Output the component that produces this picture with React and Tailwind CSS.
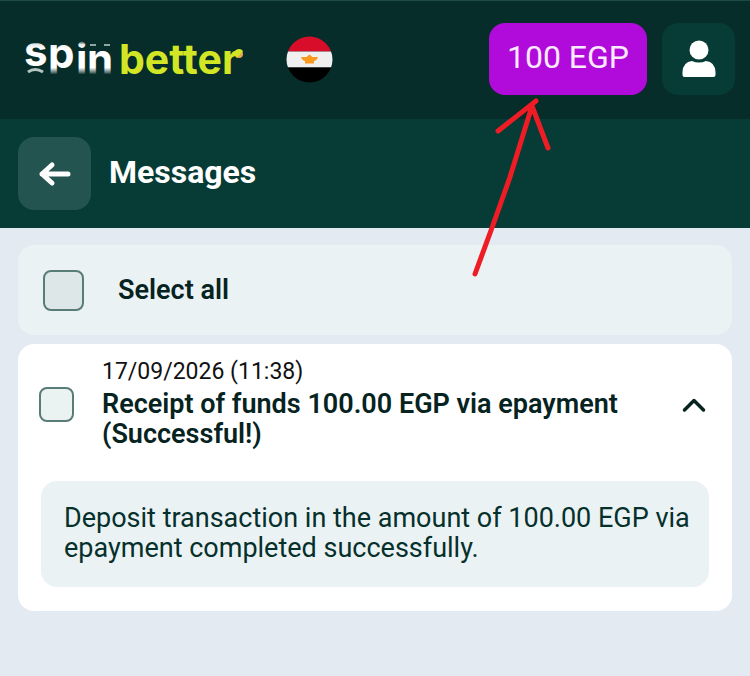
import { useState } from "react";

const messages = [
  {
    id: 1,
    date: "17/09/2026 (11:38)",
    title: "Receipt of funds 100.00 EGP via epayment (Successful!)",
    body: "Deposit transaction in the amount of 100.00 EGP via epayment completed successfully."
  }
];

// "spin" letters fade out at the edges like a slot reel
function Logo() {
  return (
    <svg width="230" height="56" viewBox="0 0 230 56" role="img" aria-label="Spin better" className="shrink-0 overflow-visible font-['Inter',sans-serif] font-bold">
      <defs>
        <linearGradient id="reel" gradientUnits="userSpaceOnUse" x1="0" y1="11" x2="0" y2="43">
          <stop offset="0" stopColor="#fff" stopOpacity="0.3" />
          <stop offset="0.08" stopColor="#fff" stopOpacity="0.9" />
          <stop offset="0.2" stopColor="#fff" />
          <stop offset="0.8" stopColor="#fff" />
          <stop offset="0.98" stopColor="#fff" stopOpacity="0.2" />
          <stop offset="1" stopColor="#fff" stopOpacity="0" />
        </linearGradient>
      </defs>
      <g fill="url(#reel)" fontSize="42">
        <text x="-1" y="35">s</text>
        <text x="23" y="37">p</text>
        <text x="51" y="43">i</text>
        <text x="62" y="43">n</text>
      </g>
      <path d="M3 41q7-5 15 0" fill="none" stroke="#b4c6c4" strokeWidth="3" />
      <path d="M65 14h6M79 14h6" stroke="#8fa5a2" strokeWidth="2" />
      <text x="94" y="43" fontSize="41" fill="#d3e625">better</text>
      <circle cx="214" cy="23" r="4" fill="#e8a555" />
      <path d="M209 23a5 5 0 0 1 9-3l-6 7z" fill="#d3e625" />
    </svg>
  );
}

function EgyptFlag() {
  return (
    <svg width="47" height="47" viewBox="0 0 47 47" aria-hidden="true">
      <clipPath id="flag">
        <circle cx="23.5" cy="23.5" r="23" />
      </clipPath>
      <g clipPath="url(#flag)">
        <path fill="#d80d29" d="M0 0h47v15.500H0z" />
        <path fill="#f0f0f0" d="M0 15.500h47v16H0z" />
        <path fill="#000" d="M0 31.500h47V47H0z" />
      </g>
      <path fill="#f79a1e" d="M15 21h5.500l3-2.500 3 2.500H32q-1 3.500-4 4v2.500h-9V25q-3-.5-4-4z" />
    </svg>
  );
}

// hand drawn pointer towards the balance
function Pointer() {
  return (
    <svg width="90" height="190" viewBox="0 0 90 190" aria-hidden="true" className="pointer-events-none absolute -left-5 top-full" fill="none" stroke="#ee1c25" strokeWidth="5" strokeLinecap="round" strokeLinejoin="round">
      <path d="M6 179L24 130L41 82L63 11M29 36L67 6M63 11L79 53" />
    </svg>
  );
}

export default function App() {
  const [selected, setSelected] = useState([]);
  const [open, setOpen] = useState([1]);

  const toggle = (list, id) => (list.includes(id) ? list.filter((x) => x !== id) : [...list, id]);

  return (
    <div className="min-h-screen bg-[#e4eaf1] font-['Roboto',sans-serif] text-[#06302b]">
      <header className="flex items-center justify-between border-t border-[#1d4a46] bg-[#062d29] pb-6 pl-[25px] pr-[15px] pt-[22px]">
        <a href="#home" className="flex items-center">
          <Logo />
        </a>
        <button type="button" aria-label="Egypt" className="ml-[31px] mr-auto">
          <EgyptFlag />
        </button>
        <div className="flex gap-[15px]">
          <div className="relative">
            <button type="button" className="h-[72px] w-[158px] rounded-2xl bg-[#b10bdb] pb-1 text-[32px] leading-9 text-[#fbe9ff]">
              100 EGP
            </button>
            <Pointer />
          </div>
          <button type="button" aria-label="Account" className="flex h-[72px] w-[73px] items-center justify-center rounded-2xl bg-[#063b36]">
            <svg width="34" height="38" viewBox="0 0 34 38" fill="#fff" aria-hidden="true">
              <circle cx="17" cy="10" r="9.500" />
              <path d="M10 21q7 3 14 0 9 1 9.500 11v3q0 2-2 2h-29q-2 0-2-2v-3q.5-10 9.500-11z" />
            </svg>
          </button>
        </div>
      </header>

      <div className="flex items-center gap-[18px] bg-[#063b36] px-[18px] py-[18px]">
        <button type="button" aria-label="Back" className="flex h-[73px] w-[73px] items-center justify-center rounded-2xl bg-[#235450]">
          <svg width="34" height="26" viewBox="0 0 34 26" fill="none" stroke="#fff" strokeWidth="5" strokeLinecap="round" strokeLinejoin="round" aria-hidden="true">
            <path d="M4 13h26M14 4L4 13l10 9" />
          </svg>
        </button>
        <h1 className="pb-1 text-[32px] font-bold leading-9 text-white">Messages</h1>
      </div>

      <main className="flex flex-col gap-[9px] px-[18px] py-[17px]">
        <label className="flex h-[90px] items-center gap-[34px] rounded-2xl bg-[#ebf2f4] px-[25px] text-[27px] font-semibold leading-[30px] text-[#06231f]">
          <input
            type="checkbox"
            checked={selected.length === messages.length}
            onChange={(e) => setSelected(e.target.checked ? messages.map((m) => m.id) : [])}
            className="h-[41px] w-[41px] appearance-none rounded-lg border-2 border-[#587d77] bg-[#dde7e8] checked:bg-[#063b36]"
          />
          Select all
        </label>

        {messages.map((m) => (
          <article key={m.id} className="rounded-2xl bg-white pb-6">
            <div className="flex items-center px-[21px] pb-7 pt-3">
              <input
                type="checkbox"
                aria-label={m.title}
                checked={selected.includes(m.id)}
                onChange={() => setSelected(toggle(selected, m.id))}
                className="h-[35px] w-[35px] shrink-0 appearance-none rounded-lg border-2 border-[#587d77] bg-[#ebf2f2] checked:bg-[#063b36]"
              />
              <div className="ml-7 mr-auto max-w-[540px]">
                <p className="text-[23px] leading-8 text-[#111]">{m.date}</p>
                <h2 className="pb-1 pt-px text-[27px] font-semibold leading-[30px] text-[#06231f]">{m.title}</h2>
              </div>
              <button type="button" aria-label="Toggle message" aria-expanded={open.includes(m.id)} onClick={() => setOpen(toggle(open, m.id))} className="px-1">
                <svg width="26" height="16" viewBox="0 0 26 16" fill="none" stroke="#06231f" strokeWidth="3.500" strokeLinecap="round" strokeLinejoin="round" aria-hidden="true">
                  <path d="M3.500 13L13 3.500l9.500 9.500" />
                </svg>
              </button>
            </div>
            {open.includes(m.id) && (
              <p className="mx-[23px] rounded-2xl bg-[#ebf2f4] pb-6 pl-[23px] pr-4 pt-[22px] text-[27px] leading-[30px]">{m.body}</p>
            )}
          </article>
        ))}
      </main>
    </div>
  );
}
